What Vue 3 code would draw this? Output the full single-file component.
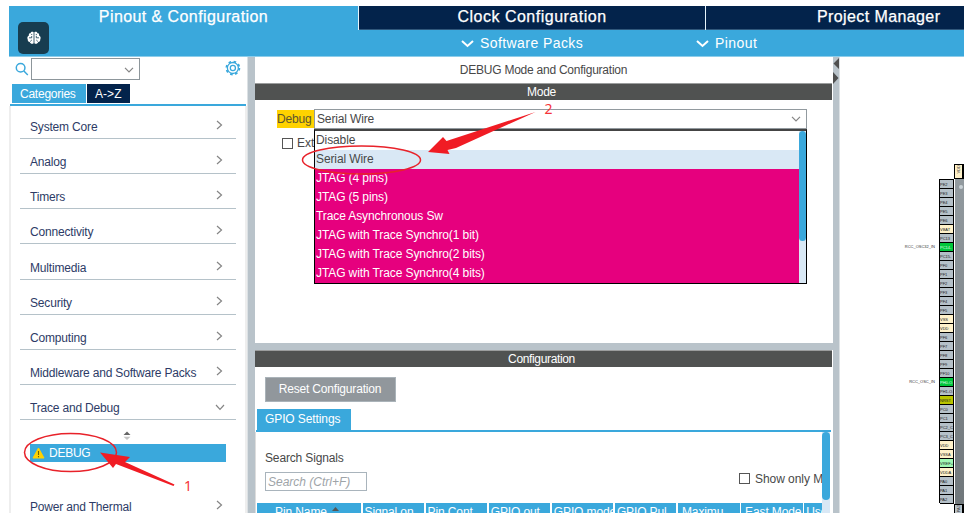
<script setup>
const categories = ['System Core', 'Analog', 'Timers', 'Connectivity', 'Multimedia', 'Security', 'Computing', 'Middleware and Software Packs', 'Trace and Debug']
const modes = ['Disable', 'Serial Wire', 'JTAG (4 pins)', 'JTAG (5 pins)', 'Trace Asynchronous Sw', 'JTAG with Trace Synchro(1 bit)', 'JTAG with Trace Synchro(2 bits)', 'JTAG with Trace Synchro(4 bits)']
const columns = ['Signal on...', 'Pin Cont...', 'GPIO out...', 'GPIO mode', 'GPIO Pul...', 'Maximu...', 'East Mode', 'Use']
const power = ['VBAT', 'VSS', 'VDD', 'VSSA', 'VDDA']
const names = ['PE2', 'PE3', 'PE4', 'PE5', 'PE6', 'VBAT', 'PC13', 'PC14-', 'PC15-', 'PF0', 'PF1', 'PF2', 'PF3', 'PF4', 'PF5', 'VSS', 'VDD', 'PF6', 'PF7', 'PF8', 'PF9', 'PF10', 'PH0-O.', 'PH1-O.', 'NRST', 'PC0', 'PC1', 'PC2_C', 'PC3_C', 'VDD', 'VSSA', 'VREF+', 'VDDA', 'PA0', 'PA1', 'PA2']
const signals = { 'PC14-': 'RCC_OSC32_IN', 'PH0-O.': 'RCC_OSC_IN' }
const kind = (n) => signals[n] ? 'active' : power.includes(n) ? 'supply' : n === 'NRST' ? 'nrst' : n === 'VREF+' ? 'vref' : ''
</script>

<template>
  <div class="app">
    <header>
      <nav class="tabs">
        <div class="tab on">Pinout &amp; Configuration</div>
        <div class="tab">Clock Configuration</div>
        <div class="tab last">Project Manager</div>
      </nav>
      <div class="subbar">
        <span class="menu m1"><svg width="13" height="9" viewBox="0 0 13 9"><path d="M1 2 6.5 7 12 2" /></svg>Software Packs</span>
        <span class="menu m2"><svg width="13" height="9" viewBox="0 0 13 9"><path d="M1 2 6.5 7 12 2" /></svg>Pinout</span>
      </div>
      <div class="badge">
        <svg width="14" height="14" viewBox="0 0 14 14">
          <path fill="#fff" d="M6.6 1.2C5.4.2 3.9.8 3.6 2 2.2 2.1 1.6 3.4 1.9 4.4.3 5.2 0 7 .7 8.2c-.2 1.5.8 2.6 2 2.8.5 1.8 2.7 2.4 3.9 1.3ZM7.4 1.2C8.6.2 10.1.8 10.4 2c1.4.1 2 1.4 1.7 2.4 1.6.8 1.9 2.6 1.2 3.8.2 1.5-.8 2.6-2 2.8-.5 1.8-2.7 2.4-3.9 1.3Z" />
          <path fill="none" stroke="#173d50" stroke-width=".8" d="M2 6.8h2.7V5M4 2.8 5.2 4M3.2 10.5 4.8 9M9.3 4.8v2H12M10 2.8 8.8 4M10.9 10.5 9.3 9" />
        </svg>
      </div>
    </header>

    <main>
      <aside>
        <div class="find">
          <svg class="glass" width="14" height="14" viewBox="0 0 14 14"><circle cx="5.7" cy="5.7" r="4.4" /><path d="M9 9l4 4" /></svg>
          <div class="combo"><svg width="10" height="6" viewBox="0 0 10 6"><path d="M1 .8 5 4.8 9 .8" /></svg></div>
          <svg class="gear" width="16" height="16" viewBox="0 0 16 16"><circle cx="8" cy="8" r="6.6" stroke-width="1.8" stroke-dasharray="2.59 2.59" /><circle cx="8" cy="8" r="5.6" /><circle cx="8" cy="8" r="2.6" /></svg>
        </div>
        <div class="switch"><div class="cat">Categories</div><div class="az">A-&gt;Z</div></div>
        <div class="list">
          <div v-for="(c, i) in categories" :key="c" class="row">
            <span>{{ c }}</span>
            <svg v-if="i < 8" width="7" height="10" viewBox="0 0 7 10"><path d="M1 1 5.5 5 1 9" /></svg>
            <svg v-else class="down" width="10" height="7" viewBox="0 0 10 7"><path d="M1 1 5 5.3 9 1" /></svg>
          </div>
          <svg class="sort" width="8" height="10" viewBox="0 0 8 10"><path fill="#666" d="M.5 4 4 .5 7.5 4Z" /><path fill="#c4c4c4" d="M.5 5.7h7L4 9Z" /></svg>
          <div class="debug">
            <svg width="13" height="12" viewBox="0 0 13 12"><path fill="#ffd200" stroke="#ffd200" stroke-linejoin="round" d="M6.5 1 12 11H1Z" /><path stroke="#6b6200" stroke-width="1.1" d="M6.5 4v4M6.5 9v1.2" /></svg>
            DEBUG
          </div>
          <div class="row thermal"><span>Power and Thermal</span><svg width="7" height="10" viewBox="0 0 7 10"><path d="M1 1 5.5 5 1 9" /></svg></div>
        </div>
      </aside>
      <div class="split"></div>

      <section class="center">
        <div class="title">DEBUG Mode and Configuration</div>
        <div class="bar">Mode</div>
        <div class="mode">
          <div class="field">
            <label>Debug</label>
            <div class="select">Serial Wire<svg width="10" height="6" viewBox="0 0 10 6"><path d="M1 .8 5 4.8 9 .8" /></svg>
              <div class="popup">
                <div class="options"><div v-for="(m, i) in modes" :key="m" class="option" :class="{ sel: i === 1, bad: i > 1 }">{{ m }}</div></div>
                <div class="track"><div class="thumb"></div></div>
              </div>
            </div>
          </div>
          <div class="ext"><i class="box"></i>Ext</div>
        </div>
        <div class="hsplit"></div>
        <div class="bar cfg">Configuration</div>
        <div class="config">
          <div class="reset">Reset Configuration</div>
          <div class="gpio"><span>GPIO Settings</span></div>
          <div class="panel">
            <div class="content">
              <div class="signals">Search Signals</div>
              <div class="filter"><div class="search">Search (Ctrl+F)</div><div class="only"><i class="box"></i>Show only M</div></div>
              <div class="table"><div class="th first">Pin Name<svg width="7" height="4" viewBox="0 0 7 4"><path fill="#555" d="M0 4 3.5 0 7 4Z" /></svg></div><div v-for="(c, i) in columns" :key="c" class="th" :class="'c' + i">{{ c }}</div></div>
            </div>
            <div class="vtrack"><div class="vthumb"></div></div>
          </div>
        </div>
      </section>

      <div class="split right">
        <svg width="6" height="28" viewBox="0 0 6 28"><path fill="#4f4f4f" d="M6 1v11L.5 6.5ZM0 15v12l5.5-6Z" /></svg>
      </div>
      <section class="chipview">
        <div class="toppin"><span>VDD</span></div>
        <div class="chip">
          <div class="pins">
            <div v-for="(n, i) in names" :key="i" class="pinrow"><span class="sig">{{ signals[n] }}</span><span class="pin" :class="kind(n)">{{ n }}</span></div>
          </div>
          <div class="body"><i></i></div>
        </div>
        <div class="toppin bottom"><span>PA3</span></div>
      </section>
    </main>

    <svg class="notes" width="967" height="513" viewBox="0 0 967 513">
      <g fill="none" stroke="#e8222a" stroke-width="1.5"><ellipse cx="361.5" cy="160" rx="59" ry="14" /><ellipse cx="70.5" cy="452.5" rx="46" ry="19" /></g>
      <path fill="#f01c24" d="M428 152 443 137 446.5 141 535.5 112 456 148 447.5 150 449.5 154Z" />
      <path fill="#f01c24" d="M100 452.5 130 457 125 462 174.5 484.5 173.5 486 116 464 113 468Z" />
      <text x="544.5" y="114">2</text><text x="184" y="491">1</text>
    </svg>
  </div>
</template>

<style>
body { background: #fff; }
</style>

<style scoped>
* { box-sizing: border-box; }
.app { position: relative; width: 967px; height: 513px; padding: 6px 3px 0 9px; overflow: hidden; font: 12px/16px "Liberation Sans", Arial, sans-serif; letter-spacing: -.24px; color: #484848; white-space: nowrap; display: flex; flex-direction: column; }
header { position: relative; height: 51px; flex: none; background: #3aa8dc; border-bottom: 1px solid #8dcdea; color: #fff; }
.tabs { display: flex; height: 24px; }
.tab { width: 348px; margin-left: 1px; background: #03234b; border-bottom: 1px solid #30577b; text-align: center; font-size: 16px; line-height: 22px; letter-spacing: .5px; box-shadow: -1px 0 #e6f4fb; -webkit-text-stroke: .25px #fff; }
.tab.on { width: 349px; margin: 0; background: #3aa8dc; border: 0; box-shadow: none; letter-spacing: .42px; }
.tab.last { flex: 1; text-align: left; padding-left: 111px; letter-spacing: .4px; }
.tab:nth-child(2) { width: 346px; }
.subbar { display: flex; height: 26px; padding-left: 452px; align-items: center; }
.menu { display: flex; align-items: center; gap: 6px; font-size: 14px; letter-spacing: .42px; }
.menu svg path { fill: none; stroke: #fff; stroke-width: 2; }
.m1 { width: 235px; }
.badge { position: absolute; left: 9px; top: 16px; width: 31px; height: 32px; border-radius: 5px; background: #173d50; display: grid; place-items: center; }
main { display: flex; flex: 1; min-height: 0; }
aside { width: 238px; display: flex; flex-direction: column; }
.find { display: flex; height: 27px; padding: 1px 6px 0; flex: none; }
.glass { margin-top: 4px; margin-right: 2px; }
.glass, .gear { fill: none; stroke: #3aa8dc; stroke-width: 1.5; }
.combo { width: 111px; height: 22px; border: 1px solid #8d969b; padding: 8px 5px; display: flex; justify-content: flex-end; }
.combo path, .select path, .row path { fill: none; stroke: #858585; stroke-width: 1.2; }
.gear { margin: 2px 0 0 85px; stroke-width: 1.3; }
.switch { display: flex; height: 22px; flex: none; gap: 1px; padding-left: 2px; margin: 0 1px; border-bottom: 2.5px solid #3aa8dc; color: #fff; line-height: 20px; }
.cat { width: 74px; background: #3aa8dc; padding-left: 8px; }
.az { width: 43px; background: #03234b; padding-left: 8px; letter-spacing: .05px; }
.cat, .az { height: 19px; }
.list { flex: 1; border: 2px solid #eee; border-width: 0 2px; padding: 0 9px; display: flex; flex-direction: column; overflow: hidden; }
.row { flex: none; height: 35.15px; border-bottom: 1px solid #b5c2c9; display: flex; justify-content: space-between; align-items: flex-end; padding: 0 13px 3px 10px; color: #2d3b66; letter-spacing: -.18px; }
.row:first-child { height: 33px; }
.row svg { margin-bottom: 5px; }
.row .down { margin-right: -2px; }
.sort { margin: 11px 0 0 103px; flex: none; }
.debug { flex: none; width: 196px; height: 18px; margin: 3px 0 0 10px; background: #3aa8dc; color: #fff; display: flex; align-items: center; padding-left: 2px; gap: 4px; letter-spacing: -.25px; }
.thermal { height: 57px; }
.split { width: 8px; background: #b9c3ca; border-left: 1px solid #dce1e4; }
.center { width: 577px; display: flex; flex-direction: column; margin-right: 1px; }
.title { height: 26px; line-height: 27px; text-align: center; }
.bar { height: 17px; flex: none; background: #505251; border-top: 1px solid #9b9d9d; color: #fff; text-align: center; line-height: 16px; padding-right: 4px; }
.mode { height: 242.5px; flex: none; padding: 9px 25px 0 22px; }
.field { display: flex; }
label { width: 37px; height: 18px; margin-top: 1px; background: #ffd200; line-height: 19px; letter-spacing: -.15px; color: #5a5530; }
.select { position: relative; width: 493px; height: 20px; border: 1px solid #929a9f; line-height: 20px; padding: 0 5px 0 2px; display: flex; align-items: center; justify-content: space-between; letter-spacing: -.14px; }
.popup { position: absolute; left: -1px; top: 19px; width: 493px; height: 155px; border: 1px solid #000; border-top: 2px solid #444; display: flex; background: #fff; }
.options { flex: 1; }
.option { height: 18.95px; line-height: 19px; padding-left: 1px; letter-spacing: -.1px; }
.option.sel { background: #d9e8f5; }
.option.bad { background: #e6007e; color: #fff; }
.track { width: 7px; background: #d9e8f5; }
.thumb { height: 110px; background: #3aa8dc; border-radius: 3.5px; }
.ext { display: flex; align-items: center; gap: 4px; margin: 6px 0 0 5px; letter-spacing: 0; }
.box { width: 11px; height: 11px; border: 1px solid #555; flex: none; }
.hsplit { height: 7px; flex: none; margin-left: -1px; margin-right: -1px; background: #b9c3ca; }
.cfg { letter-spacing: -.35px; }
.config { flex: 1; min-height: 0; display: flex; flex-direction: column; padding-top: 10px; }
.reset { width: 131px; height: 25px; margin: 0 0 7px 9.5px; flex: none; background: #91979c; border: 1px solid #aab3b9; color: #fff; text-align: center; line-height: 23px; letter-spacing: -.19px; }
.gpio { height: 23px; flex: none; margin: 0 1px; padding-left: 1px; border-bottom: 2.5px solid #3aa8dc; color: #fff; }
.gpio span { display: block; width: 94px; height: 21px; background: #3aa8dc; line-height: 20px; padding-left: 8px; letter-spacing: -.1px; }
.panel { display: flex; flex: 1; min-height: 0; border-left: 1px solid #ddd; padding-right: 2px; }
.content { flex: 1; min-width: 0; overflow: hidden; padding: 18px 0 0 1px; }
.signals { padding-left: 8px; letter-spacing: -.15px; }
.filter { display: flex; justify-content: space-between; margin: 6px 0 0 8px; }
.search { width: 102px; height: 19px; border: 1px solid #a9b4bc; font-style: italic; color: #9ea4a8; line-height: 18px; padding-left: 2px; letter-spacing: 0; }
.only { width: 83px; display: flex; align-items: center; gap: 5px; height: 14px; letter-spacing: -.05px; }
.table { display: flex; gap: 1.5px; margin-top: 12px; color: #fff; width: 620px; }
.th { width: 61.6px; height: 20px; flex: none; overflow: hidden; background: #3aa8dc; line-height: 18px; padding-left: 2px; letter-spacing: -.12px; }
.th.first { width: 104px; padding-left: 18px; letter-spacing: -.1px; }
.th svg { margin: 0 0 5px 5px; }
.c5, .c6 { padding-left: 4px; }
.vtrack { width: 8px; background: #d9e8f5; }
.vthumb { height: 68px; background: #3aa8dc; border-radius: 4px; }
.right { width: 7px; border-right: 1px solid #dce1e4; border-left: 0; }
.right svg { display: block; }
.chipview { flex: 1; padding-top: 107px; display: flex; flex-direction: column; align-items: flex-end; letter-spacing: 0; }
.toppin { width: 10px; height: 15px; flex: none; border: 1px solid #000; border-right-width: 2px; background: #fff1c9; font-size: 4px; line-height: 7px; }
.toppin span { display: block; writing-mode: vertical-rl; transform: rotate(180deg); }
.bottom { background: #b9c3ca; }
.chip { display: flex; height: 325px; flex: none; }
.pins { width: 75px; display: flex; flex-direction: column; margin-right: 1px; border-bottom: 1px solid #000; border-image: linear-gradient(to right, transparent 60px, #000 60px) 1; }
.pinrow { flex: 1; min-height: 0; display: flex; justify-content: flex-end; font-size: 4px; line-height: 10px; gap: 4px; }
.sig { color: #333; }
.pin { width: 15px; border: 1px solid #000; border-bottom-width: 0; background: #b5c0c8; overflow: hidden; color: #222; line-height: 9px; }
.pin.active { background: #00c63b; color: #dfffe6; }
.pin.supply { background: #fff1c9; }
.pin.nrst { background: #b9c400; }
.pin.vref { background: #a0f8b4; }
.body { width: 9px; background: linear-gradient(#929a9f, #70777b); padding: 6px 0 0 4px; }
.body i { display: block; width: 4px; height: 4px; border-radius: 50%; background: #c9d1d6; }
.notes { position: absolute; left: 0; top: 0; letter-spacing: 0; }
.notes text { font: 14px "Noto Sans", sans-serif; fill: #f5333a; }
</style>
